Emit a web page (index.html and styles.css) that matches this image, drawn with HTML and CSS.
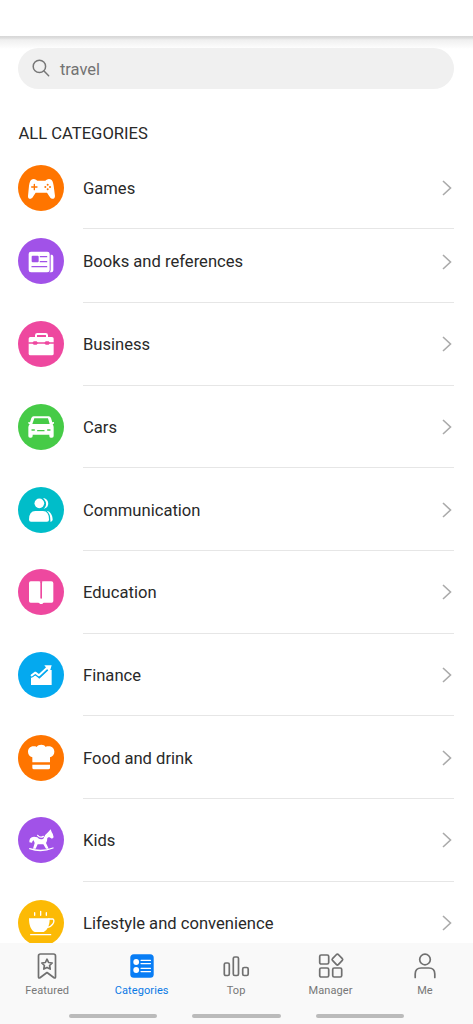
FILE: index.html
```html
<!DOCTYPE html>
<html lang="en">
<head>
<meta charset="utf-8">
<title>Categories</title>
<link rel="stylesheet" href="styles.css">
</head>
<body>
<div class="app">
  <header class="topbar"></header>
  <main class="content">
    <div class="search">
      <svg class="search-icon" viewBox="0 0 20 20"><circle cx="8" cy="8" r="6.7"/><path d="M13 13l5 5"/></svg>
      <span>travel</span>
    </div>
    <h1 class="heading">ALL CATEGORIES</h1>
    <ul class="list">
      <li class="row">
        <svg class="icon orange" viewBox="0 0 138 138"><path d="M43 43q5-2 11 1l4 3h24l4-3q6-3 11-1c6 2 8 8 10 19l4 31c0 10-11 11-15 4l-9-14H53l-9 14c-4 7-15 6-14-4l3-31c2-11 4-17 10-19z"/><path class="cut-line thin" d="M41 66h16M49 58v16"/><g class="cut"><circle cx="89" cy="59" r="3"/><circle cx="89" cy="73" r="3"/><circle cx="82" cy="66" r="3"/><circle cx="96" cy="66" r="3"/></g></svg>
        <span class="label">Games</span><svg class="chevron" viewBox="0 0 10 16"><path d="M1 1l7.5 7L1 15"/></svg>
      </li>
      <li class="row compact">
        <svg class="icon purple" viewBox="0 0 138 138"><rect x="32" y="41" width="63" height="62" rx="7"/><path d="M98 50h2q6 0 6 6v41q0 6-6 6h-6q4-2 4-8z"/><rect class="cut" x="41" y="53" width="21" height="20" rx="3"/><path class="cut-line thin" d="M67 56h19M67 71h19M42 86h44"/></svg>
        <span class="label">Books and references</span><svg class="chevron" viewBox="0 0 10 16"><path d="M1 1l7.5 7L1 15"/></svg>
      </li>
      <li class="row">
        <svg class="icon pink" viewBox="0 0 138 138"><rect x="32" y="48" width="75" height="55" rx="5"/><path class="line" d="M54 49v-6q0-4 4-4h25q4 0 4 4v6"/><path class="cut-line thin" d="M32 66h75"/><path class="cut" d="M43 66l4-5h9l4 5-4 5h-9zM79 66l4-5h9l4 5-4 5h-9z"/></svg>
        <span class="label">Business</span><svg class="chevron" viewBox="0 0 10 16"><path d="M1 1l7.5 7L1 15"/></svg>
      </li>
      <li class="row">
        <svg class="icon green" viewBox="0 0 138 138"><path d="M47 37h45q5 0 7 5l4 13 5-1q2 5-4 7 3 4 3 9v26q0 5-5 5h-4q-4 0-4-5v-4H44v4q0 5-5 5h-3q-5 0-5-5V70q0-5 4-9-6-2-4-7l5 1 4-13q2-5 7-5z"/><path class="cut" d="M49 43h41l5 17H43z"/><path class="cut-line thin" d="M42 78h7M89 78h7M59 80h19"/></svg>
        <span class="label">Cars</span><svg class="chevron" viewBox="0 0 10 16"><path d="M1 1l7.5 7L1 15"/></svg>
      </li>
      <li class="row">
        <svg class="icon teal" viewBox="0 0 138 138"><circle cx="64" cy="49" r="14.5"/><path d="M33 98q0-26 19-26h23q18 0 18 26 0 6-6 6H39q-6 0-6-6z"/><path d="M75 34c20-1 21 30 2 31 10-8 10-22-2-31zM86 71c14 3 18 17 18 27q0 6-8 6 2-2 1-6 0-18-11-27z"/></svg>
        <span class="label">Communication</span><svg class="chevron" viewBox="0 0 10 16"><path d="M1 1l7.5 7L1 15"/></svg>
      </li>
      <li class="row">
        <svg class="icon pink" viewBox="0 0 138 138"><path d="M38 37h24q6 0 7 4 2-4 8-4h23q6 0 6 6v53q0 5-5 5H78q-3 0-5 4h-7q-2-4-6-4H38q-5 0-5-5V43q0-6 5-6z"/><path class="cut-line" d="M69.500 40v47"/></svg>
        <span class="label">Education</span><svg class="chevron" viewBox="0 0 10 16"><path d="M1 1l7.500 7L1 15"/></svg>
      </li>
      <li class="row">
        <svg class="icon blue" viewBox="0 0 138 138"><path d="M39 77l13-7 12 10 28-26h9v45H39z"/><path class="line cased" d="M41 70l11-8 11 8L89 46"/><path class="line" d="M41 70l11-8 11 8L89 46"/><path d="M79 40h22l-6 20-6-7z"/></svg>
        <span class="label">Finance</span><svg class="chevron" viewBox="0 0 10 16"><path d="M1 1l7.5 7L1 15"/></svg>
      </li>
      <li class="row">
        <svg class="icon orange" viewBox="0 0 138 138"><path d="M43 82V67c-18-4-18-33 4-33 4 0 6 0 9 2 4-8 23-9 27 0 3-2 5-2 9-2 22 0 22 29 4 33v15zM43 89h53v9q0 5-5 5H48q-5 0-5-5z"/></svg>
        <span class="label">Food and drink</span><svg class="chevron" viewBox="0 0 10 16"><path d="M1 1l7.500 7L1 15"/></svg>
      </li>
      <li class="row">
        <svg class="icon purple" viewBox="0 0 138 138"><path d="M34 76q-1-16 14-17l10 2q7 9 18 4 4-12 14-19l8-9 3 8q5 6 6 16l-5 4-9-5-5 3q0 10-4 15l8 17h-8L76 82H59l-6 13h-8l5-17-3-8q-4 1-5 7z"/><path class="line thin" d="M59 55q8 9 17 3M35 95q35 12 70-2"/></svg>
        <span class="label">Kids</span><svg class="chevron" viewBox="0 0 10 16"><path d="M1 1l7.500 7L1 15"/></svg>
      </li>
      <li class="row">
        <svg class="icon yellow" viewBox="0 0 138 138"><path d="M33 55h62c0 21-6 35-18 41H50c-12-5-17-21-17-41z"/><path class="line thin" d="M91 57h14c7 6-2 24-18 25M38 104h60M50 38v8M68 34v12M85 38v8"/></svg>
        <span class="label">Lifestyle and convenience</span><svg class="chevron" viewBox="0 0 10 16"><path d="M1 1l7.5 7L1 15"/></svg>
      </li>
    </ul>
  </main>
  <footer class="footer">
    <nav class="tabs">
      <a class="tab"><svg viewBox="0 0 28 28"><path d="M5.500 4q0-2 2-2h13q2 0 2 2v21q0 1.500-1.500.8L14 20.500l-7 5.300q-1.500.7-1.500-.8z"/><path d="M14 7.200l1.600 3.300 3.600.5-2.600 2.500.6 3.600-3.200-1.700-3.200 1.700.6-3.600L8.800 11l3.600-.5z"/></svg><span>Featured</span></a>
      <a class="tab active"><svg viewBox="0 0 28 28"><rect class="solid" x="2.300" y="2.300" width="23.400" height="23.400" rx="3.500"/><circle class="white" cx="8.200" cy="10" r="2.900"/><circle class="white" cx="8.200" cy="18" r="2.900"/><path class="white-line" d="M13 8.300h9.500M13 11.600h9.500M13 16.300h9.500M13 19.600h9.500"/></svg><span>Categories</span></a>
      <a class="tab"><svg viewBox="0 0 28 28"><rect x="2.300" y="11" width="5" height="12.500" rx="1.500"/><rect x="11.300" y="5" width="5.200" height="18.500" rx="1.500"/><rect x="20.700" y="15.500" width="5.500" height="8" rx="1.500"/></svg><span>Top</span></a>
      <a class="tab"><svg viewBox="0 0 28 28"><rect x="2.700" y="3" width="9" height="9" rx="1.500"/><rect x="2.700" y="16" width="9" height="9" rx="1.500"/><rect x="15.700" y="16" width="9" height="9" rx="1.500"/><path d="M19.500 2.500q.9-.8 1.800 0l4 4.200q.8.800 0 1.700l-4 4.200q-.9.800-1.800 0l-4-4.200q-.8-.9 0-1.700z"/></svg><span>Manager</span></a>
      <a class="tab"><svg viewBox="0 0 28 28"><circle cx="14" cy="7.500" r="5.300"/><path d="M4.200 25.500V22q0-6 6-6h7.600q6 0 6 6v3.500"/></svg><span>Me</span></a>
    </nav>
    <div class="handles"><i></i><i></i><i></i></div>
  </footer>
</div>
</body>
</html>
```
FILE: styles.css
```css
* { box-sizing: border-box; }
body { margin: 0; background: #fff; color: #292929; font-family: Roboto, sans-serif; }
.app { height: 1024px; display: flex; flex-direction: column; overflow: hidden; }
.topbar { height: 36px; flex: none; background: #fff; }
.content {
  flex: 1; min-height: 0; overflow: hidden; padding: 12px 19px 0 18.400px;
  background: linear-gradient(#d7d7d7 0, #dedede 2px, #f0f0f0 4px, #f8f8f8 9px, #fff 13px);
}
.search { display: flex; align-items: center; gap: 9px; height: 41px; padding: 1px 14px 0; border-radius: 21px; background: #f0f0f0; color: #737373; font-size: 16.500px; }
.search-icon { width: 18.500px; height: 18.500px; margin-top: -1px; fill: none; stroke: #777; stroke-width: 1.600; stroke-linecap: round; }
.heading { margin: 35px 0 0; font-size: 16.600px; font-weight: 400; line-height: 20px; }
.list { list-style: none; margin: 2.600px 0 0; padding: 0; }
.row { display: flex; align-items: center; height: 82.720px; padding-right: 2px; background: linear-gradient(#e6e6e6, #e6e6e6) 64.500px 100% / 100% 1px no-repeat; }
.row.compact { height: 73.500px; align-items: flex-end; padding-bottom: 18.500px; }
.compact .label { padding-bottom: 13px; }
.compact .chevron { margin-bottom: 14.500px; }
.label { flex: 1; margin: 2px 0 0 18.600px; font-size: 16.600px; line-height: 20px; }
.compact .label { padding-bottom: 12px; }
.icon { width: 46px; height: 46px; border-radius: 50%; background: var(--tone); fill: #fff; }
.icon .cut { fill: var(--tone); }
.icon .line, .icon .cut-line { fill: none; stroke: #fff; stroke-width: 6; stroke-linecap: round; stroke-linejoin: round; }
.icon .cut-line { stroke: var(--tone); stroke-width: 5; }
.icon .thin { stroke-width: 4; }
.icon .cased { stroke: var(--tone); stroke-width: 13; }
.orange { --tone: #ff7500; }
.purple { --tone: #a152e8; }
.pink { --tone: #ee489f; }
.green { --tone: #46cb47; }
.teal { --tone: #00bdc9; }
.blue { --tone: #04a9ef; }
.yellow { --tone: #fcba05; }
.chevron { width: 10px; height: 16px; fill: none; stroke: #aaa; stroke-width: 1.600; }
.footer { flex: none; height: 81.500px; background: #f9f9f9; }
.tabs { display: grid; grid-template-columns: repeat(5, 1fr); height: 71px; padding: 9.500px .8px 0 0; }
.tab { display: flex; flex-direction: column; align-items: center; color: #777; font-size: 11px; line-height: 14px; letter-spacing: .1px; }
.tab svg { width: 28px; height: 28px; margin-bottom: 4px; fill: none; stroke: #707070; stroke-width: 1.700; stroke-linejoin: round; stroke-linecap: round; }
.tab.active { color: #0b7ae5; }
.tab .solid { fill: #087df5; stroke: none; }
.tab .white { fill: #fff; stroke: none; }
.tab .white-line { stroke: #fff; stroke-width: 1.200; }
.handles { display: flex; gap: 35px; padding-left: 68.600px; }
.handles i { width: 88.500px; height: 4px; border-radius: 2px; background: #bbb; }
```
